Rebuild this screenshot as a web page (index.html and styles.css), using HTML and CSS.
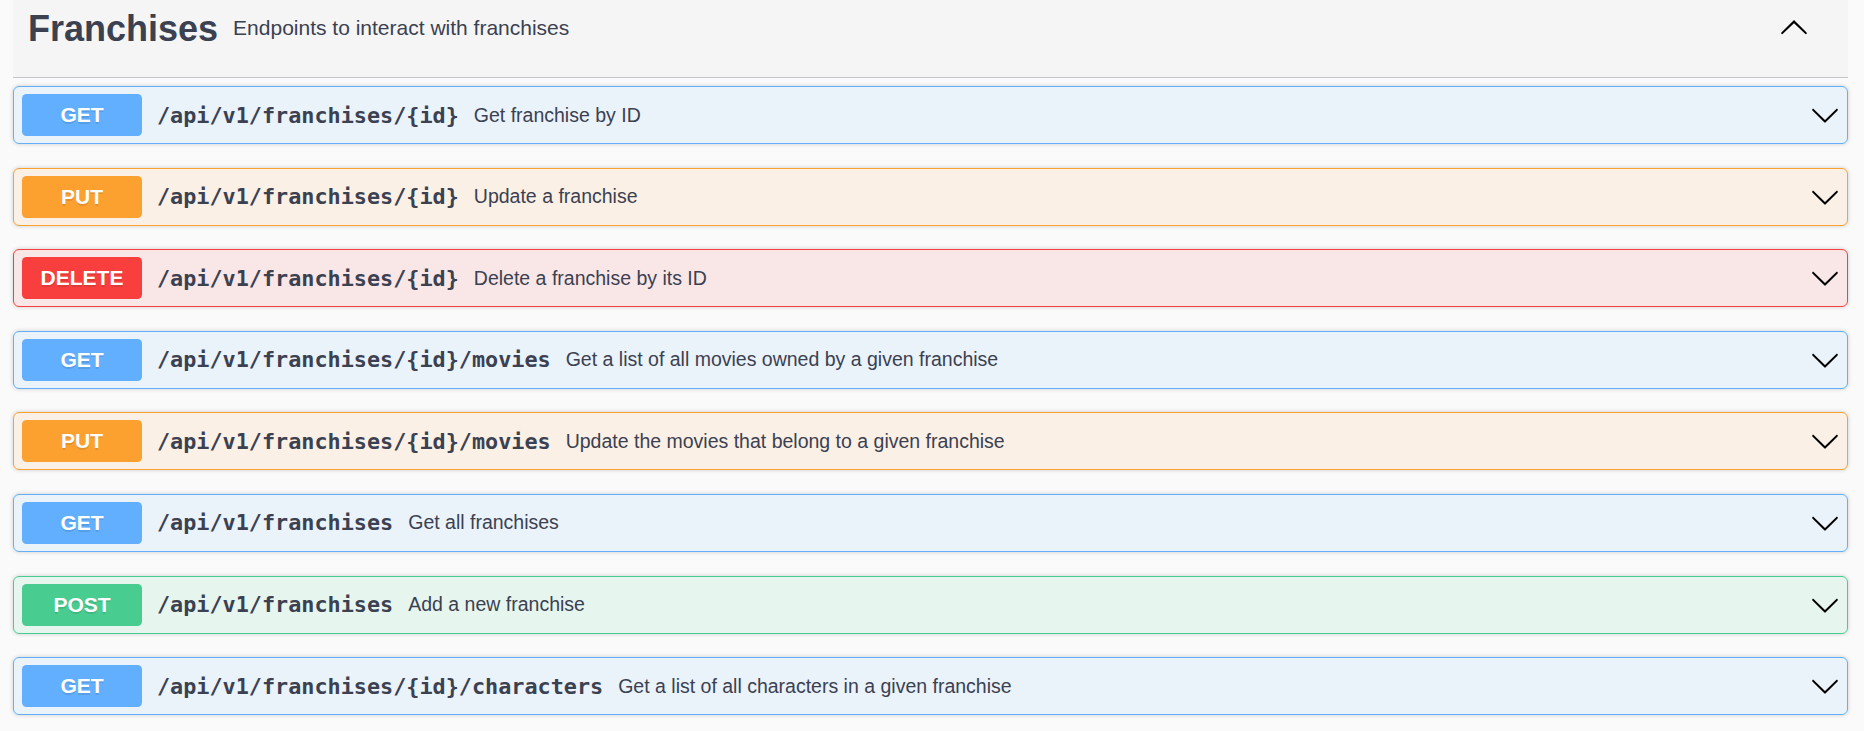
FILE: index.html
```html
<!DOCTYPE html>
<html lang="en">
<head>
<meta charset="utf-8">
<title>Franchises</title>
<link rel="stylesheet" href="styles.css">
</head>
<body>
<svg width="0" height="0" class="defs">
  <defs>
    <path id="chev" d="M17.418 6.109c.272-.268.709-.268.979 0s.271.701 0 .969l-7.908 7.83c-.27.268-.707.268-.979 0l-7.908-7.83c-.27-.268-.27-.701 0-.969.271-.268.709-.268.979 0L10 13.25l7.418-7.141z"/>
  </defs>
</svg>
<section class="tag-section">
  <h3 class="tag">
    <span class="tag-title">Franchises</span>
    <small class="tag-desc">Endpoints to interact with franchises</small>
    <svg class="arrow up" viewBox="0 0 20 20"><use href="#chev"/></svg>
  </h3>
  <div class="ops">
    <div class="op get"><div class="summary"><span class="method">GET</span><span class="path">/api/v1/franchises/{id}</span><span class="desc">Get franchise by ID</span><svg class="arrow" viewBox="0 0 20 20"><use href="#chev"/></svg></div></div>
    <div class="op put"><div class="summary"><span class="method">PUT</span><span class="path">/api/v1/franchises/{id}</span><span class="desc">Update a franchise</span><svg class="arrow" viewBox="0 0 20 20"><use href="#chev"/></svg></div></div>
    <div class="op delete"><div class="summary"><span class="method">DELETE</span><span class="path">/api/v1/franchises/{id}</span><span class="desc">Delete a franchise by its ID</span><svg class="arrow" viewBox="0 0 20 20"><use href="#chev"/></svg></div></div>
    <div class="op get"><div class="summary"><span class="method">GET</span><span class="path">/api/v1/franchises/{id}/movies</span><span class="desc">Get a list of all movies owned by a given franchise</span><svg class="arrow" viewBox="0 0 20 20"><use href="#chev"/></svg></div></div>
    <div class="op put"><div class="summary"><span class="method">PUT</span><span class="path">/api/v1/franchises/{id}/movies</span><span class="desc">Update the movies that belong to a given franchise</span><svg class="arrow" viewBox="0 0 20 20"><use href="#chev"/></svg></div></div>
    <div class="op get"><div class="summary"><span class="method">GET</span><span class="path">/api/v1/franchises</span><span class="desc">Get all franchises</span><svg class="arrow" viewBox="0 0 20 20"><use href="#chev"/></svg></div></div>
    <div class="op post"><div class="summary"><span class="method">POST</span><span class="path">/api/v1/franchises</span><span class="desc">Add a new franchise</span><svg class="arrow" viewBox="0 0 20 20"><use href="#chev"/></svg></div></div>
    <div class="op get"><div class="summary"><span class="method">GET</span><span class="path">/api/v1/franchises/{id}/characters</span><span class="desc">Get a list of all characters in a given franchise</span><svg class="arrow" viewBox="0 0 20 20"><use href="#chev"/></svg></div></div>
  </div>
</section>
</body>
</html>
```
FILE: styles.css
```css
html, body {
  margin: 0;
  background: #fafafa;
}
body {
  padding: 0 16px 0 13px;
  font-family: "Liberation Sans", Arial, sans-serif;
  color: #3b4151;
  overflow: hidden;
}
.defs {
  position: absolute;
  width: 0;
  height: 0;
}
.tag {
  display: flex;
  align-items: center;
  height: 56px;
  margin: 0;
  padding: 0 39px 21px 15px;
  background: #f5f5f5;
  border-bottom: 1px solid #c4c5ca;
  font-weight: 400;
}
.tag-title {
  font-size: 36px;
  font-weight: 700;
  line-height: 41px;
}
.tag-desc {
  flex: 1;
  margin-left: 15px;
  font-size: 21px;
}
.arrow {
  width: 30px;
  height: 30px;
  flex: none;
  fill: #000;
}
.arrow.up {
  transform: rotate(180deg);
}
.ops {
  padding-top: 8px;
}
.op {
  border: 1px solid;
  border-radius: 6px;
  margin-bottom: 23.6px;
  box-shadow: 0 0 4px rgba(0, 0, 0, 0.19);
}
.summary {
  display: flex;
  align-items: center;
  padding: 7px 7px 7px 8px;
}
.method {
  flex: none;
  width: 120px;
  padding: 9px 0;
  font-size: 21px;
  line-height: 24px;
  font-weight: 700;
  text-align: center;
  color: #fff;
  border-radius: 4.5px;
  text-shadow: 0 1.5px 0 rgba(0, 0, 0, 0.1);
}
.path {
  padding: 0 15px;
  font-family: "DejaVu Sans Mono", monospace;
  font-weight: 700;
  font-size: 21.8px;
  color: #3b4151;
}
.desc {
  flex: 1;
  font-size: 19.5px;
  color: #3b4151;
}
.get { border-color: #61affe; background: rgba(97, 175, 254, 0.1); }
.get .method { background: #61affe; }
.put { border-color: #fca130; background: rgba(252, 161, 48, 0.1); }
.put .method { background: #fca130; }
.delete { border-color: #f93e3e; background: rgba(249, 62, 62, 0.1); }
.delete .method { background: #f93e3e; }
.post { border-color: #49cc90; background: rgba(73, 204, 144, 0.1); }
.post .method { background: #49cc90; }
```
